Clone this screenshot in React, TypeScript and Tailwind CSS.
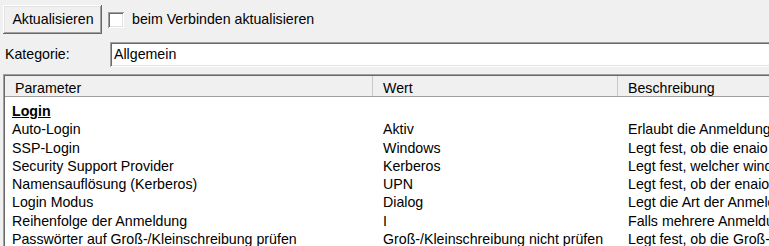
import React from 'react'

const rows: [string, string, string][] = [
  ['Auto-Login', 'Aktiv', 'Erlaubt die Anmeldung ohne'],
  ['SSP-Login', 'Windows', 'Legt fest, ob die enaio'],
  ['Security Support Provider', 'Kerberos', 'Legt fest, welcher windo'],
  ['Namensauflösung (Kerberos)', 'UPN', 'Legt fest, ob der enaio'],
  ['Login Modus', 'Dialog', 'Legt die Art der Anmeldung'],
  ['Reihenfolge der Anmeldung', 'I', 'Falls mehrere Anmeldungen'],
  ['Passwörter auf Groß-/Kleinschreibung prüfen', 'Groß-/Kleinschreibung nicht prüfen', 'Legt fest, ob die Groß-/'],
]

const sunken =
  'shadow-[inset_1px_1px_0_#a0a0a0,inset_-1px_-1px_0_#ffffff,inset_2px_2px_0_#696969,inset_-2px_-2px_0_#e3e3e3]'

export default function App() {
  return (
    <div className="w-[769px] h-[246px] overflow-hidden bg-[#f0f0f0] text-[14.2px] text-black font-['Liberation_Sans',Arial,sans-serif]">
      {/* toolbar */}
      <div className="flex items-center pt-[5px] pl-[3px]">
        <button className="w-[99px] h-[29px] shrink-0 pl-[1px] bg-[#f0f0f0] shadow-[inset_-1px_-1px_0_#696969,inset_1px_1px_0_#ffffff,inset_-2px_-2px_0_#a0a0a0,inset_2px_2px_0_#e3e3e3] leading-none">
          Aktualisieren
        </button>
        <span className={`ml-[6px] w-[16px] h-[16px] shrink-0 bg-white ${sunken}`} />
        <span className="ml-[8px]">beim Verbinden aktualisieren</span>
      </div>

      {/* Kategorie */}
      <div className="flex items-center mt-[8px]">
        <span className="w-[110px] shrink-0 pl-[5px]">Kategorie:</span>
        <div className={`flex items-center h-[25px] w-[700px] shrink-0 bg-white pl-[4px] ${sunken}`}>
          Allgemein
        </div>
      </div>

      {/* Liste */}
      <div className={`ml-[3px] mt-[7px] w-[800px] h-[200px] bg-white p-[2px] ${sunken}`}>
        <div className="grid grid-cols-[368px_245px_1fr] h-[21px] bg-[#f0f0f0] border-b border-[#a0a0a0] leading-[16px]">
          <div className="pl-[10px] pt-[4px] border-r border-[#c8c8c8]">Parameter</div>
          <div className="pl-[10px] pt-[4px] border-r border-[#c8c8c8]">Wert</div>
          <div className="pl-[10px] pt-[4px]">Beschreibung</div>
        </div>
        <div className="pt-[5px] leading-[18.3px]">
          <div className="pl-[7px] font-bold underline">Login</div>
          {rows.map(([p, w, b]) => (
            <div key={p} className="grid grid-cols-[368px_245px_1fr] whitespace-nowrap">
              <div className="pl-[7px]">{p}</div>
              <div className="pl-[10px]">{w}</div>
              <div className="pl-[10px] overflow-hidden">{b}</div>
            </div>
          ))}
        </div>
      </div>
    </div>
  )
}
